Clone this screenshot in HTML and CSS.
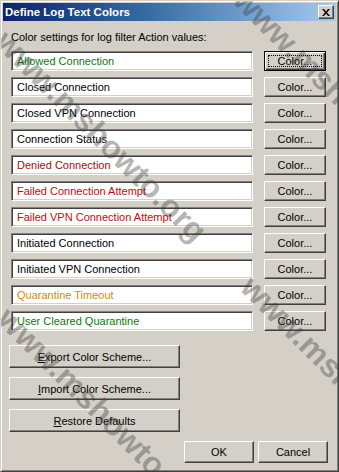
FILE: index.html
```html
<!DOCTYPE html>
<html lang="en">

<head>
    <meta charset="UTF-8">
    <title>Define Log Text Colors</title>
    <link rel="stylesheet" href="styles.css">
</head>

<body>

    <div class="dialog">
        <div class="titlebar">
            <span class="title">Define Log Text Colors</span>
            <button class="close-btn" aria-label="Close">
                <svg width="8" height="7" viewBox="0 0 8 7">
                    <path d="M0 0h2l2 2.5L6 0h2L5 3.5 8 7H6L4 4.5 2 7H0l3-3.5z" fill="#000"/>
                </svg>
            </button>
        </div>

        <div class="dialog-body">
            <p class="intro">Color settings for log filter Action values:</p>

            <div class="color-list">
                <div class="field green">Allowed Connection</div>
                <button class="btn default"><span class="focus">Color...</span></button>

                <div class="field">Closed Connection</div>
                <button class="btn">Color...</button>

                <div class="field">Closed VPN Connection</div>
                <button class="btn">Color...</button>

                <div class="field">Connection Status</div>
                <button class="btn">Color...</button>

                <div class="field dark-red">Denied Connection</div>
                <button class="btn">Color...</button>

                <div class="field red">Failed Connection Attempt</div>
                <button class="btn">Color...</button>

                <div class="field red">Failed VPN Connection Attempt</div>
                <button class="btn">Color...</button>

                <div class="field">Initiated Connection</div>
                <button class="btn">Color...</button>

                <div class="field">Initiated VPN Connection</div>
                <button class="btn">Color...</button>

                <div class="field orange">Quarantine Timeout</div>
                <button class="btn">Color...</button>

                <div class="field green">User Cleared Quarantine</div>
                <button class="btn">Color...</button>
            </div>

            <div class="scheme-buttons">
                <button class="btn wide"><u>E</u>xport Color Scheme...</button>
                <button class="btn wide"><u>I</u>mport Color Scheme...</button>
                <button class="btn wide"><u>R</u>estore Defaults</button>
            </div>

            <div class="dialog-footer">
                <button class="btn action">OK</button>
                <button class="btn action">Cancel</button>
            </div>
        </div>

        <!-- site watermark over the screenshot -->
        <div class="watermark wm-top"><span>www.mshowto.org</span></div>
        <div class="watermark wm-mid"><span>www.mshowto.org</span><span>www.mshowto.org</span></div>
        <div class="watermark wm-low"><span>www.mshowto.org</span></div>
    </div>

</body>

</html>
```

FILE: styles.css
```css
body, html {
    margin: 0;
    padding: 0;
    background: #d4d0c8;
    font-family: 'Liberation Sans', Arial, sans-serif;
    font-size: 11px;
    color: #000;
}

.dialog {
    position: relative;
    overflow: hidden;
    box-sizing: border-box;
    width: 339px;
    height: 472px;
    padding: 2px;
    background: #d4d0c8;
    border: 1px solid;
    border-color: #d4d0c8 #404040 #404040 #d4d0c8;
    box-shadow: inset 1px 1px #fff, inset -1px -1px #808080;
    display: flex;
    flex-direction: column;
}

/* title bar */
.titlebar {
    height: 18px;
    display: flex;
    align-items: center;
    justify-content: space-between;
    padding: 0 2px 0 2px;
    background: linear-gradient(to right, #0a246a 0%, #3a6ea5 45%, #a6caf0 100%);
}

.title {
    color: #fff;
    font-weight: bold;
    font-size: 11.5px;
}

.close-btn {
    box-sizing: border-box;
    width: 16px;
    height: 14px;
    padding: 0;
    display: flex;
    align-items: center;
    justify-content: center;
    background: #d4d0c8;
    border: 1px solid;
    border-color: #fff #404040 #404040 #fff;
    box-shadow: inset -1px -1px #808080;
}

.dialog-body {
    padding: 0 8px;
    display: flex;
    flex-direction: column;
}

.intro {
    margin: 10px 0 7px;
    line-height: 13px;
}

/* log action rows */
.color-list {
    display: grid;
    grid-template-columns: 242px 62px;
    grid-auto-rows: 20px;
    column-gap: 11px;
    row-gap: 6px;
}

.field {
    box-sizing: border-box;
    height: 20px;
    line-height: 18px;
    padding: 0 5px 0 5px;
    background: #fff;
    border: 1px solid;
    border-color: #808080 #fff #fff #808080;
    box-shadow: inset 1px 1px #404040, inset -1px -1px #d4d0c8;
    white-space: nowrap;
    overflow: hidden;
}

.green { color: #0a7a0a; }
.dark-red { color: #a00c0c; }
.red { color: #c80808; }
.orange { color: #d18a10; }

.btn {
    box-sizing: border-box;
    height: 20px;
    padding: 0;
    font-family: inherit;
    font-size: 11px;
    color: #000;
    background: #d4d0c8;
    border: 1px solid;
    border-color: #fff #404040 #404040 #fff;
    box-shadow: inset -1px -1px #808080;
}

.btn.default {
    border-color: #000;
    box-shadow: inset 1px 1px #fff, inset -1px -1px #404040, inset -2px -2px #808080;
    padding: 3px;
}

.btn .focus {
    display: block;
    height: 100%;
    box-sizing: border-box;
    line-height: 11px;
    border: 1px dotted #000;
}

.btn u {
    text-decoration: underline;
}

.scheme-buttons {
    display: flex;
    flex-direction: column;
    gap: 9px;
    margin: 14px 0 0 -2px;
}

.btn.wide {
    width: 171px;
    height: 23px;
}

.dialog-footer {
    display: flex;
    justify-content: flex-end;
    gap: 4px;
    margin-top: 9px;
}

.btn.action {
    width: 70px;
    height: 22px;
}

/* watermark */
.watermark {
    position: absolute;
    white-space: nowrap;
    font-family: 'Liberation Sans', Arial, sans-serif;
    font-weight: bold;
    font-size: 32px;
    line-height: 32px;
    color: rgba(60, 60, 60, 0.38);
    transform-origin: 0 50%;
    transform: rotate(45deg);
    pointer-events: none;
}

.watermark span {
    margin-right: 64px;
}

.wm-top {
    left: 238px;
    top: -23px;
}

.wm-mid {
    left: 0;
    top: 19px;
}

.wm-low {
    left: 2px;
    top: 296px;
}
```
